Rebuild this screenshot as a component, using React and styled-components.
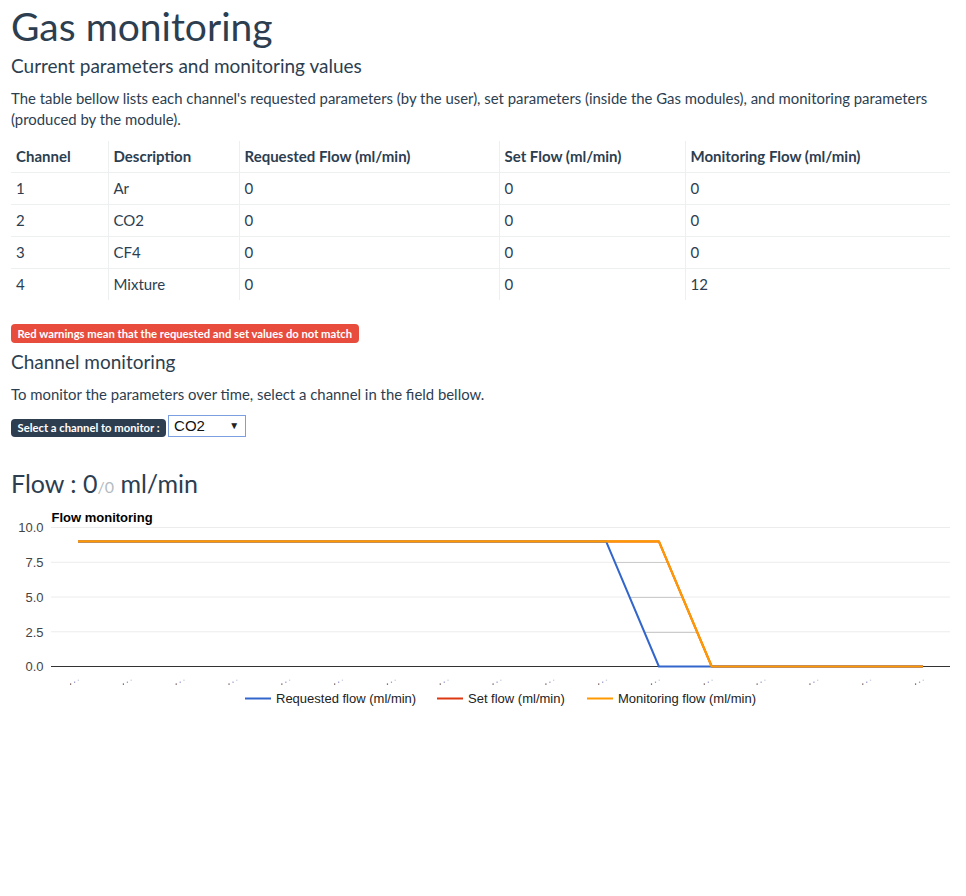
import React from "react";
import styled, { createGlobalStyle } from "styled-components";

const Global = createGlobalStyle`
  html, body { margin: 0; padding: 0; background: #fff; }
  body {
    font-family: Lato, "Noto Sans", sans-serif;
    font-size: 15px;
    line-height: 1.42857;
    color: #2c3e50;
  }
  * { box-sizing: border-box; }
`;

const Page = styled.div`
  padding: 0 16px 0 11px;
  min-height: 896px;
`;

const Title = styled.h1`
  font-size: 39px;
  font-weight: 400;
  line-height: 1.1;
  margin: 4.5px 0 8.8px;
`;

const SubTitle = styled.h4`
  font-size: 19px;
  font-weight: 400;
  line-height: 1.1;
  margin: ${(p) => p.$mt || 0}px 0 11px;
`;

const Text = styled.p`
  margin: 0 0 10px;
  line-height: 21px;
  font-size: 14.9px;
`;

const Table = styled.table`
  width: 100%;
  border-collapse: collapse;
  border-spacing: 0;
  margin-top: 11px;
  margin-bottom: 24px;
`;

const Th = styled.th`
  text-align: left;
  font-weight: 700;
  padding: 5px 5px;
  line-height: 21px;
  border-bottom: 1px solid #ecf0f1;
  border-right: ${(p) => (p.$last ? "none" : "1px solid #ecf0f1")};
  width: ${(p) => p.$w}px;
`;

const Td = styled.td`
  padding: 5px 5px;
  line-height: 21px;
  border-top: 1px solid #ecf0f1;
  border-right: ${(p) => (p.$last ? "none" : "1px solid #ecf0f1")};
`;

const Badge = styled.span`
  display: block;
  width: max-content;
  background: ${(p) => p.$bg};
  color: #fff;
  font-weight: 700;
  font-size: 11.25px;
  line-height: ${(p) => p.$h}px;
  height: ${(p) => p.$h}px;
  padding: 0 6.5px;
  border-radius: 4px;
  white-space: nowrap;
`;

const SelectRow = styled.div`
  display: flex;
  align-items: flex-end;
  gap: 2px;
  margin-top: 10px;
`;

const SelectBox = styled.div`
  width: 78px;
  height: 22px;
  border: 1px solid #7b9fe0;
  background: #fff;
  font-family: "Liberation Sans", Arial, sans-serif;
  font-size: 15px;
  line-height: 20px;
  padding: 0 6px 0 5px;
  color: #111;
  display: flex;
  align-items: center;
  justify-content: space-between;
`;

const Arrow = styled.span`
  font-size: 10px;
  color: #222;
`;

const FlowHeading = styled.h3`
  font-size: 25px;
  font-weight: 400;
  line-height: 1.1;
  margin: 32.8px 0 7.8px;
`;

const Small = styled.small`
  font-size: 64%;
  color: #b4bcc2;
`;

const ChartSvg = styled.svg`
  display: block;
  font-family: "Liberation Sans", Arial, sans-serif;
`;

const cols = [
  { label: "Channel", w: 97 },
  { label: "Description", w: 131 },
  { label: "Requested Flow (ml/min)", w: 260 },
  { label: "Set Flow (ml/min)", w: 186 },
  { label: "Monitoring Flow (ml/min)", w: 265 },
];

const rows = [
  ["1", "Ar", "0", "0", "0"],
  ["2", "CO2", "0", "0", "0"],
  ["3", "CF4", "0", "0", "0"],
  ["4", "Mixture", "0", "0", "12"],
];

function Chart() {
  const gridYs = [22.5, 57.25, 92, 126.75, 161.5];
  const labels = ["10.0", "7.5", "5.0", "2.5", "0.0"];
  const x0 = 67;
  const dx = 52.81;
  const yOf = (v) => 161.5 - v * 13.9;
  const xs = Array.from({ length: 17 }, (_, i) => x0 + i * dx);
  const blue = xs.map((x, i) => [x, yOf(i <= 10 ? 9 : 0)]);
  const orange = xs.map((x, i) => [x, yOf(i <= 11 ? 9 : 0)]);
  const pts = (arr) => arr.map(([x, y]) => `${x.toFixed(1)},${y.toFixed(1)}`).join(" ");
  const darkGrid = [7.5, 5, 2.5].map((v) => {
    const t = (9 - v) / 9;
    return {
      y: yOf(v),
      x1: x0 + 10 * dx + t * dx,
      x2: x0 + 11 * dx + t * dx,
    };
  });
  const legend = [
    { c: "#3366cc", x: 234, t: "Requested flow (ml/min)" },
    { c: "#dc3912", x: 426, t: "Set flow (ml/min)" },
    { c: "#ff9900", x: 576, t: "Monitoring flow (ml/min)" },
  ];
  return (
    <ChartSvg width="939" height="210" viewBox="0 0 939 210">
      <text x="40.5" y="16.7" fontSize="13" fontWeight="700" fill="#000">
        Flow monitoring
      </text>
      {gridYs.slice(0, 4).map((y) => (
        <line key={y} x1="40" x2="939" y1={y} y2={y} stroke="#ececec" strokeWidth="1" />
      ))}
      {darkGrid.map((g) => (
        <line key={g.y} x1={g.x1} x2={g.x2} y1={Math.round(g.y) + 0.5} y2={Math.round(g.y) + 0.5} stroke="#cccccc" strokeWidth="1" />
      ))}
      {gridYs.map((y, i) => (
        <text key={i} x="32.5" y={y + 4.8} fontSize="13" fill="#444" textAnchor="end">
          {labels[i]}
        </text>
      ))}
      <line x1="40" x2="939" y1="161.5" y2="161.5" stroke="#333" strokeWidth="1" />
      {xs.map((x, i) => (
        <g key={i}>
          <rect x={x - 8} y="178.5" width="1.2" height="1.2" fill="#5a3a3a" />
          <rect x={x - 4} y="176.6" width="1.2" height="1.2" fill="#8a8ac0" />
          <rect x={x - 0.3} y="174.6" width="1.3" height="1.3" fill="#c8d0dc" />
        </g>
      ))}
      <polyline points={pts(orange)} fill="none" stroke="#dc3912" strokeWidth="2" strokeLinejoin="round" />
      <polyline points={pts(blue)} fill="none" stroke="#3366cc" strokeWidth="2" strokeLinejoin="round" />
      <polyline points={pts(orange)} fill="none" stroke="#ff9900" strokeWidth="2.2" strokeLinejoin="round" />
      {legend.map((l) => (
        <g key={l.t}>
          <line x1={l.x} x2={l.x + 26} y1="193.5" y2="193.5" stroke={l.c} strokeWidth="2" />
          <text x={l.x + 31} y="198" fontSize="13" fill="#222">
            {l.t}
          </text>
        </g>
      ))}
    </ChartSvg>
  );
}

export default function App() {
  return (
    <Page>
      <Global />
      <Title>Gas monitoring</Title>
      <SubTitle>Current parameters and monitoring values</SubTitle>
      <Text>
        The table bellow lists each channel's requested parameters (by the user), set parameters
        (inside the Gas modules), and monitoring parameters (produced by the module).
      </Text>
      <Table>
        <thead>
          <tr>
            {cols.map((c, i) => (
              <Th key={c.label} $w={c.w} $last={i === cols.length - 1}>
                {c.label}
              </Th>
            ))}
          </tr>
        </thead>
        <tbody>
          {rows.map((r) => (
            <tr key={r[0]}>
              {r.map((v, i) => (
                <Td key={i} $last={i === r.length - 1}>
                  {v}
                </Td>
              ))}
            </tr>
          ))}
        </tbody>
      </Table>
      <Badge $bg="#e74c3c" $h={19}>
        Red warnings mean that the requested and set values do not match
      </Badge>
      <SubTitle $mt={9}>Channel monitoring</SubTitle>
      <Text>To monitor the parameters over time, select a channel in the field bellow.</Text>
      <SelectRow>
        <Badge $bg="#2c3e50" $h={18}>
          Select a channel to monitor :
        </Badge>
        <SelectBox>
          <span>CO2</span>
          <Arrow>▼</Arrow>
        </SelectBox>
      </SelectRow>
      <FlowHeading>
        Flow : 0<Small>/0</Small> ml/min
      </FlowHeading>
      <Chart />
    </Page>
  );
}
